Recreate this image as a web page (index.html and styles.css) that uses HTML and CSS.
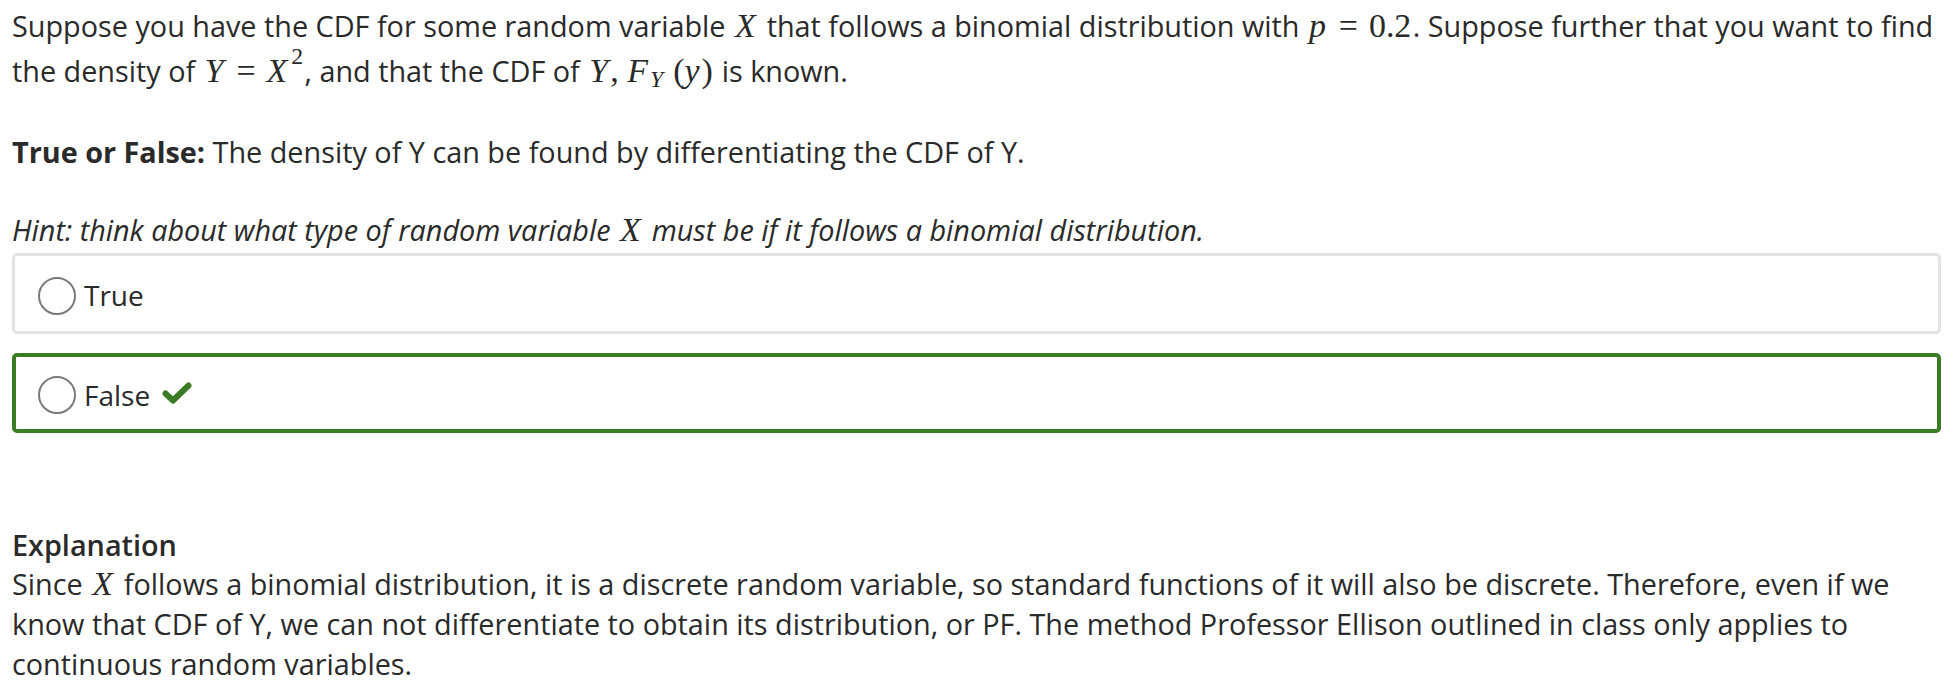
FILE: index.html
```html
<!DOCTYPE html>
<html>
<head>
<meta charset="utf-8">
<link rel="stylesheet" href="styles.css">
</head>
<body>
<div class="quiz">
  <p class="stem">Suppose you have the CDF for some random variable <span class="m"><i>X</i></span> that follows a binomial distribution with <span class="m"><i>p</i><span class="rel">=</span>0.2</span>. Suppose further that you want to find the density of <span class="m"><i>Y</i><span class="rel">=</span><i>X</i><sup>2</sup></span>, and that the CDF of <span class="m"><i>Y</i>, <i>F</i><sub><i>Y</i></sub> (<i>y</i>)</span> is known.</p>
  <p class="tf"><strong>True or False:</strong> The density of Y can be found by differentiating the CDF of Y.</p>
  <p class="hint"><em>Hint: think about what type of random variable <span class="m"><i>X</i></span> must be if it follows a binomial distribution.</em></p>
  <div class="answers">
    <div class="answer">
      <span class="radio"></span>
      <span class="label">True</span>
    </div>
    <div class="answer correct">
      <span class="radio"></span>
      <span class="label">False</span>
      <svg class="check" viewBox="0 0 30 22" width="30" height="22"><polyline points="3.5,11.5 11,18.5 26.5,3.5" fill="none" stroke="#3a7b24" stroke-width="6" stroke-linecap="round" stroke-linejoin="round"/></svg>
    </div>
  </div>
  <div class="explanation">
    <div class="exp-title">Explanation</div>
    <p class="exp-text">Since <span class="m"><i>X</i></span> follows a binomial distribution, it is a discrete random variable, so standard functions of it will also be discrete. Therefore, even if we know that CDF of Y, we can not differentiate to obtain its distribution, or PF. The method Professor Ellison outlined in class only applies to continuous random variables.</p>
  </div>
</div>
</body>
</html>
```

FILE: styles.css
```css
html, body {
  margin: 0;
  padding: 0;
  background: #ffffff;
}

body {
  font-family: "Open Sans", "Noto Sans", sans-serif;
  font-size: 28.8px;
  line-height: 39px;
  color: #2a2a2a;
}

.quiz {
  padding: 3px 19px 0 12px;
}

p {
  margin: 0;
}

.m {
  font-family: "Liberation Serif", "DejaVu Serif", serif;
  font-size: 1.18em;
  white-space: nowrap;
  margin: 0 0.04em 0 0.06em;
}

.m i {
  font-style: italic;
  padding-right: 0.06em;
}

.rel {
  margin: 0 0.32em;
}

.m sup {
  font-size: 0.7em;
  line-height: 0;
  vertical-align: 0.75em;
  margin-left: 0.08em;
}

.m sub {
  font-size: 0.7em;
  line-height: 0;
  vertical-align: -0.2em;
}

.stem {
  line-height: 45px;
}

.tf {
  margin-top: 39px;
}

.tf strong {
  font-weight: 700;
}

.hint {
  margin-top: 39px;
}

.answers {
  margin-top: 4px;
  display: flex;
  flex-direction: column;
  gap: 19px;
}

.answer {
  height: 81px;
  box-sizing: border-box;
  border: 3px solid #e3e3e3;
  border-radius: 5px;
  display: flex;
  align-items: center;
  padding: 4px 0 0 23px;
}

.answer.correct {
  height: 80px;
  border: 4px solid #3a7b24;
  padding-left: 22px;
}

.radio {
  width: 38px;
  height: 38px;
  box-sizing: border-box;
  border: 2px solid #7a7a7a;
  border-radius: 50%;
  flex: none;
}

.label {
  font-size: 28px;
  margin-left: 8px;
  color: #2a2a2a;
}

.check {
  margin-left: 12px;
  margin-top: -4px;
}

.explanation {
  margin-top: 92px;
}

.exp-title {
  font-weight: 600;
}

.exp-text {
  line-height: 40px;
}
```
